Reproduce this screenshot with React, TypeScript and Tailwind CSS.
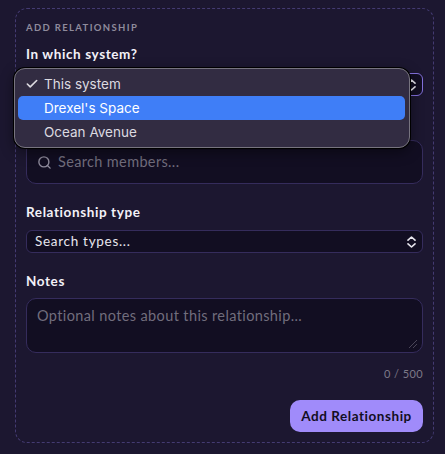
import { Search, Check } from "lucide-react";

const body = "font-['Lato','Noto_Sans',sans-serif]";

function Chevrons() {
  return (
    <svg width="9" height="12" viewBox="0 0 9 12" fill="none" stroke="#e8e6ee" strokeWidth="1.6" strokeLinecap="round" strokeLinejoin="round">
      <path d="M1 4.2 4.5 1 8 4.2" />
      <path d="M1 7.8 4.5 11 8 7.8" />
    </svg>
  );
}

function Label({ children, className = "" }: { children: React.ReactNode; className?: string }) {
  return <div className={`text-[13.5px] leading-[16px] font-bold tracking-[0.6px] text-[#f3f1f8] ${className}`}>{children}</div>;
}

export default function App() {
  return (
    <div className={`relative w-[445px] h-[454px] overflow-hidden bg-[#1c1730] ${body} pt-[8px] pl-[15px]`}>
      <div className="w-[419px] h-[435px] border border-dashed border-[#443b72] rounded-[12px] pt-[12px] pl-[10px] pr-[10px]">
        <div className="text-[9.5px] leading-[14px] font-bold tracking-[1.35px] text-[#8f8b9c]">ADD RELATIONSHIP</div>
        <Label className="mt-[11px]">In which system?</Label>
        <div className="mt-[11px] h-[23px] border border-[#8370dc] rounded-[6px] bg-[#120e22] flex items-center justify-end pr-[6px]">
          <Chevrons />
        </div>
        <div className="mt-[44px] h-[44px] border border-[#352c5c] rounded-[10px] bg-[#120e22] flex items-center pl-[10px] gap-[6px]">
          <Search size={15} color="#8f8b9c" strokeWidth={2.2} />
          <input readOnly placeholder="Search members..." className="flex-1 bg-transparent outline-none text-[14.5px] tracking-[0.35px] placeholder:text-[#716d7d]" />
        </div>
        <Label className="mt-[20px]">Relationship type</Label>
        <div className="mt-[10px] h-[23px] border border-[#352c5c] rounded-[6px] bg-[#120e22] flex items-center justify-between pl-[8px] pr-[6px]">
          <span className="text-[13.5px] tracking-[0.7px] text-[#e8e6ee]">Search types...</span>
          <Chevrons />
        </div>
        <Label className="mt-[20px]">Notes</Label>
        <div className="relative mt-[9px]">
          <textarea readOnly placeholder="Optional notes about this relationship..." className="block w-full h-[55px] resize-none border border-[#352c5c] rounded-[10px] bg-[#120e22] px-[10px] py-[7px] text-[14.5px] leading-[20px] tracking-[0.38px] outline-none placeholder:text-[#716d7d]" />
          <svg width="10" height="10" viewBox="0 0 10 10" fill="none" stroke="#4a4658" strokeWidth="1" className="absolute right-[5px] bottom-[4px]">
            <path d="M1 9 9 1" />
            <path d="M5 9 9 5" />
          </svg>
        </div>
        <div className="mt-[14px] text-right text-[11px] leading-[14px] tracking-[0.4px] text-[#7d7988]">0 / 500</div>
        <div className="mt-[19px] flex justify-end">
          <button className="w-[133px] h-[32px] rounded-[10px] bg-[#a08bfa] text-[13.5px] font-bold tracking-[0.55px] text-[#120e22]">Add Relationship</button>
        </div>
      </div>

      <div className="absolute left-[14px] top-[68px] w-[396px] h-[80px] rounded-[11px] bg-[#322c42] border border-[#77747f] shadow-[0_0_0_1px_#000,0_4px_14px_rgba(0,0,0,0.45)] pl-[3px] pr-[4px] py-[3px] font-['Inter',sans-serif] text-[13.5px] text-[#dcdae0]">
        <div className="h-[24px] flex items-center relative pl-[26px]">
          <Check size={14} strokeWidth={2.8} className="absolute left-[7px] text-[#dcdae0]" />
          This system
        </div>
        <div className="h-[24px] flex items-center pl-[26px] bg-[#3f7ef7] rounded-[5px] text-white">Drexel's Space</div>
        <div className="h-[24px] flex items-center pl-[26px]">Ocean Avenue</div>
      </div>
    </div>
  );
}
